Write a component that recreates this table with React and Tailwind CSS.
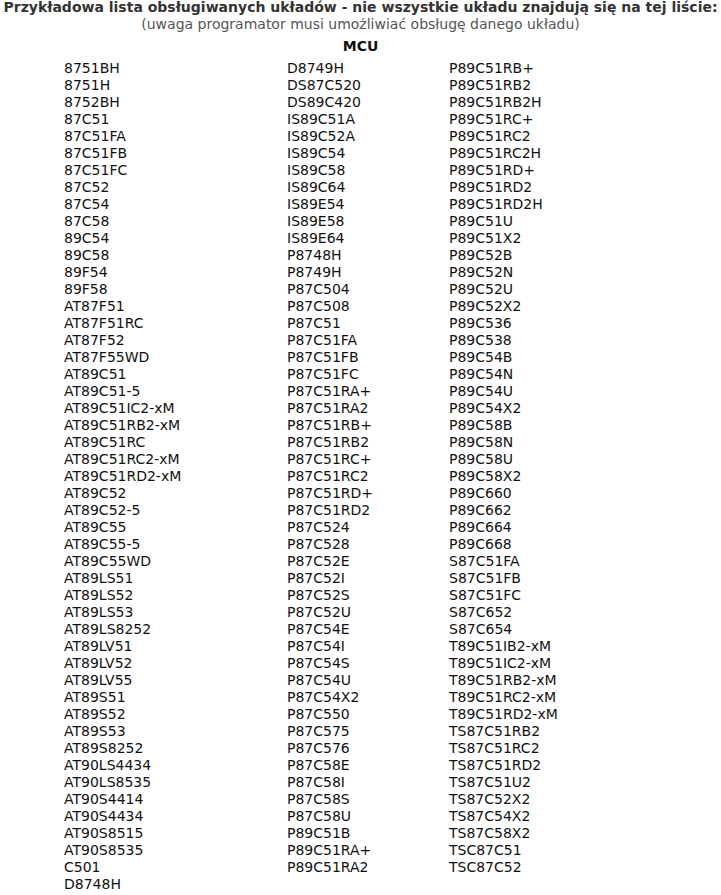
const col1 = [
  '8751BH', '8751H', '8752BH', '87C51', '87C51FA', '87C51FB', '87C51FC', '87C52', '87C54', '87C58',
  '89C54', '89C58', '89F54', '89F58', 'AT87F51', 'AT87F51RC', 'AT87F52', 'AT87F55WD', 'AT89C51',
  'AT89C51-5', 'AT89C51IC2-xM', 'AT89C51RB2-xM', 'AT89C51RC', 'AT89C51RC2-xM', 'AT89C51RD2-xM',
  'AT89C52', 'AT89C52-5', 'AT89C55', 'AT89C55-5', 'AT89C55WD', 'AT89LS51', 'AT89LS52', 'AT89LS53',
  'AT89LS8252', 'AT89LV51', 'AT89LV52', 'AT89LV55', 'AT89S51', 'AT89S52', 'AT89S53', 'AT89S8252',
  'AT90LS4434', 'AT90LS8535', 'AT90S4414', 'AT90S4434', 'AT90S8515', 'AT90S8535', 'C501', 'D8748H',
];

const col2 = [
  'D8749H', 'DS87C520', 'DS89C420', 'IS89C51A', 'IS89C52A', 'IS89C54', 'IS89C58', 'IS89C64', 'IS89E54',
  'IS89E58', 'IS89E64', 'P8748H', 'P8749H', 'P87C504', 'P87C508', 'P87C51', 'P87C51FA', 'P87C51FB',
  'P87C51FC', 'P87C51RA+', 'P87C51RA2', 'P87C51RB+', 'P87C51RB2', 'P87C51RC+', 'P87C51RC2', 'P87C51RD+',
  'P87C51RD2', 'P87C524', 'P87C528', 'P87C52E', 'P87C52I', 'P87C52S', 'P87C52U', 'P87C54E', 'P87C54I',
  'P87C54S', 'P87C54U', 'P87C54X2', 'P87C550', 'P87C575', 'P87C576', 'P87C58E', 'P87C58I', 'P87C58S',
  'P87C58U', 'P89C51B', 'P89C51RA+', 'P89C51RA2',
];

const col3 = [
  'P89C51RB+', 'P89C51RB2', 'P89C51RB2H', 'P89C51RC+', 'P89C51RC2', 'P89C51RC2H', 'P89C51RD+',
  'P89C51RD2', 'P89C51RD2H', 'P89C51U', 'P89C51X2', 'P89C52B', 'P89C52N', 'P89C52U', 'P89C52X2',
  'P89C536', 'P89C538', 'P89C54B', 'P89C54N', 'P89C54U', 'P89C54X2', 'P89C58B', 'P89C58N', 'P89C58U',
  'P89C58X2', 'P89C660', 'P89C662', 'P89C664', 'P89C668', 'S87C51FA', 'S87C51FB', 'S87C51FC', 'S87C652',
  'S87C654', 'T89C51IB2-xM', 'T89C51IC2-xM', 'T89C51RB2-xM', 'T89C51RC2-xM', 'T89C51RD2-xM', 'TS87C51RB2',
  'TS87C51RC2', 'TS87C51RD2', 'TS87C51U2', 'TS87C52X2', 'TS87C54X2', 'TS87C58X2', 'TSC87C51', 'TSC87C52',
];

function Column({ items }) {
  return (
    <div className="flex flex-col">
      {items.map(name => (
        <div key={name} className="h-[17px] whitespace-nowrap">{name}</div>
      ))}
    </div>
  );
}

export default function App() {
  return (
    <div className="w-[721px] min-h-[895px] bg-white font-['DejaVu_Sans',Verdana,sans-serif] text-[14px] leading-[17px] text-[#111]">
      {/* Header */}
      <div className="text-center -mt-px">
        <h1 className="font-bold text-[#333] whitespace-nowrap">
          Przykładowa lista obsługiwanych układów - nie wszystkie układu znajdują się na tej liście:
        </h1>
        <p className="text-[#555]">(uwaga programator musi umożliwiać obsługę danego układu)</p>
      </div>

      <div className="mt-[5px] text-center font-bold text-[#111]">MCU</div>

      {/* Chip list */}
      <div className="mt-[5px] grid grid-cols-[223px_162px_1fr] pl-[64px]">
        <Column items={col1} />
        <Column items={col2} />
        <Column items={col3} />
      </div>
    </div>
  );
}
